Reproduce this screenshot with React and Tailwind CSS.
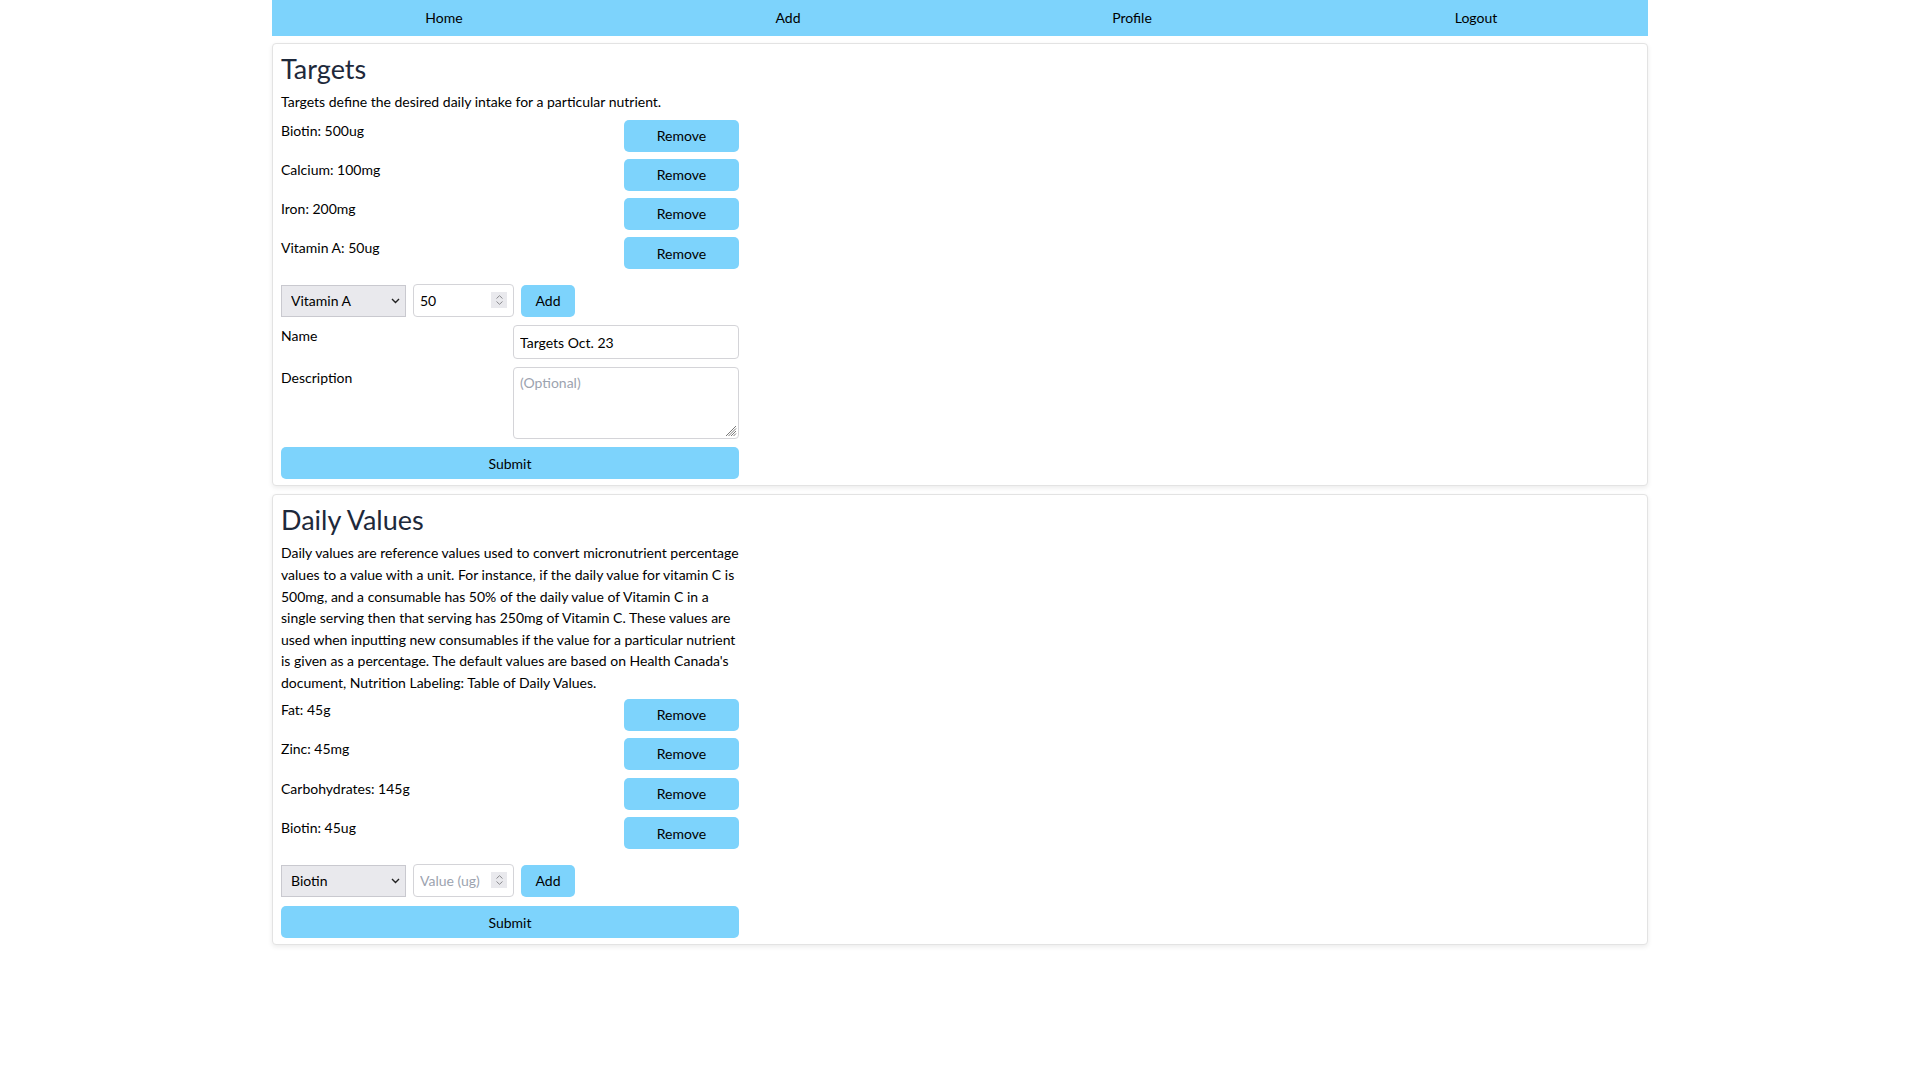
import { useState } from 'react';

const FONT = '[font-family:Lato,"Noto_Sans",sans-serif]';

const NAV = ['Home', 'Add', 'Profile', 'Logout'];

const targets = [
  { id: 1, name: 'Biotin', value: 500, unit: 'ug' },
  { id: 2, name: 'Calcium', value: 100, unit: 'mg' },
  { id: 3, name: 'Iron', value: 200, unit: 'mg' },
  { id: 4, name: 'Vitamin A', value: 50, unit: 'ug' },
];

const dailyValues = [
  { id: 1, name: 'Fat', value: 45, unit: 'g' },
  { id: 2, name: 'Zinc', value: 45, unit: 'mg' },
  { id: 3, name: 'Carbohydrates', value: 145, unit: 'g' },
  { id: 4, name: 'Biotin', value: 45, unit: 'ug' },
];

const NUTRIENTS = ['Biotin', 'Calcium', 'Carbohydrates', 'Fat', 'Iron', 'Vitamin A', 'Vitamin C', 'Zinc'];

const Card = ({ children }) => (
  <div className="border border-[#e3e3e3] rounded-[4px] shadow-[0_2px_5px_rgba(0,0,0,0.08)] bg-white px-2 pt-2 pb-[6px]">
    {children}
  </div>
);

const Button = ({ children, className = '' }) => (
  <button type="button" className={`bg-[#7dd3fc] text-black rounded-[5px] h-8 ${className}`}>{children}</button>
);

const Chevron = () => (
  <svg width="9" height="6" viewBox="0 0 9 6" className="absolute right-[6px] top-[13px] pointer-events-none">
    <path d="M1 1l3.5 3.5L8 1" fill="none" stroke="#222" strokeWidth="1.4" />
  </svg>
);

const Spinner = () => (
  <div className="absolute right-[7px] top-[8px] w-4 h-4 bg-[#e9e9ed] flex flex-col items-center justify-center gap-[2px] pointer-events-none">
    <svg width="7" height="4" viewBox="0 0 7 4"><path d="M0.5 3.5L3.5 0.7L6.5 3.5" fill="none" stroke="#8a8a8e" strokeWidth="1" /></svg>
    <svg width="7" height="4" viewBox="0 0 7 4"><path d="M0.5 0.5L3.5 3.3L6.5 0.5" fill="none" stroke="#8a8a8e" strokeWidth="1" /></svg>
  </div>
);

const AddRow = ({ selected, amount, placeholder }) => {
  const [value, setValue] = useState(amount);
  return (
    <div className="flex items-center gap-[7px] mt-[15px]">
      <div className="relative">
        <select defaultValue={selected} className="appearance-none w-[125px] h-8 bg-[#e9e9ed] border border-[#c9c9cf] pl-[9px] text-black outline-none">
          {NUTRIENTS.map(n => <option key={n} value={n}>{n}</option>)}
        </select>
        <Chevron />
      </div>
      <div className="relative">
        <input value={value} onChange={e => setValue(e.target.value)} placeholder={placeholder} className="w-[101px] h-[33px] border border-[#d4d4d8] rounded-[4px] pl-[6px] pr-6 outline-none placeholder:text-[#9ca3af]" />
        <Spinner />
      </div>
      <Button className="w-[54px]">Add</Button>
    </div>
  );
};

const ItemRow = ({ item }) => (
  <div className="flex items-start justify-between">
    <p>{item.name}: {item.value}{item.unit}</p>
    <Button className="w-[115px]">Remove</Button>
  </div>
);

const App = () => {
  return (
    <div className={`min-h-screen bg-white text-black text-[14px] leading-[21.6px] ${FONT}`}>
      <div className="w-[1376px] mx-auto">
        <nav className="h-9 bg-[#7dd3fc] grid grid-cols-4 items-center text-center">
          {NAV.map(n => <a key={n} href="#" className="text-black">{n}</a>)}
        </nav>

        <div className="mt-[7px] flex flex-col gap-2">
          <Card>
            <div className="w-[458px]">
              <h1 className="text-[27px] leading-[34px] text-[#1e293b] mb-[5px]">Targets</h1>
              <p className="mb-[7px]">Targets define the desired daily intake for a particular nutrient.</p>
              <div className="flex flex-col gap-[7.3px]">
                {targets.map(t => <ItemRow key={t.id} item={t} />)}
              </div>
              <AddRow selected="Vitamin A" amount="50" placeholder="" />
              <div className="grid grid-cols-2 gap-x-[6px] gap-y-2 mt-2 items-start">
                <label>Name</label>
                <input defaultValue="Targets Oct. 23" className="h-[34px] border border-[#d4d4d8] rounded-[4px] px-[6px] outline-none" />
                <label>Description</label>
                <div className="relative h-[72px]">
                  <textarea placeholder="(Optional)" className="w-full h-full resize-none border border-[#d4d4d8] rounded-[4px] px-[6px] py-[4px] outline-none placeholder:text-[#9ca3af]" />
                  <svg width="12" height="12" viewBox="0 0 12 12" className="absolute right-[2px] bottom-[2px] pointer-events-none">
                    <path d="M11 1L1 11M11 3.5L3.5 11M11 6L6 11M11 8.5L8.5 11" stroke="#7a7a7a" strokeWidth="1" />
                  </svg>
                </div>
              </div>
              <Button className="w-full mt-2">Submit</Button>
            </div>
          </Card>

          <Card>
            <div className="w-[458px]">
              <h1 className="text-[27px] leading-[34px] text-[#1e293b] mb-[5px]">Daily Values</h1>
              <p className="mb-[5px]">
                Daily values are reference values used to convert micronutrient percentage values to a value with a unit. For instance, if the daily value for vitamin C is 500mg, and a consumable has 50% of the daily value of Vitamin C in a single serving then that serving has 250mg of Vitamin C. These values are used when inputting new consumables if the value for a particular nutrient is given as a percentage. The default values are based on Health Canada's document, Nutrition Labeling: Table of Daily Values.
              </p>
              <div className="flex flex-col gap-[7.6px]">
                {dailyValues.map(d => <ItemRow key={d.id} item={d} />)}
              </div>
              <AddRow selected="Biotin" amount="" placeholder="Value (ug)" />
              <Button className="w-full mt-[9px]">Submit</Button>
            </div>
          </Card>
        </div>
      </div>
    </div>
  );
};

export default App;
